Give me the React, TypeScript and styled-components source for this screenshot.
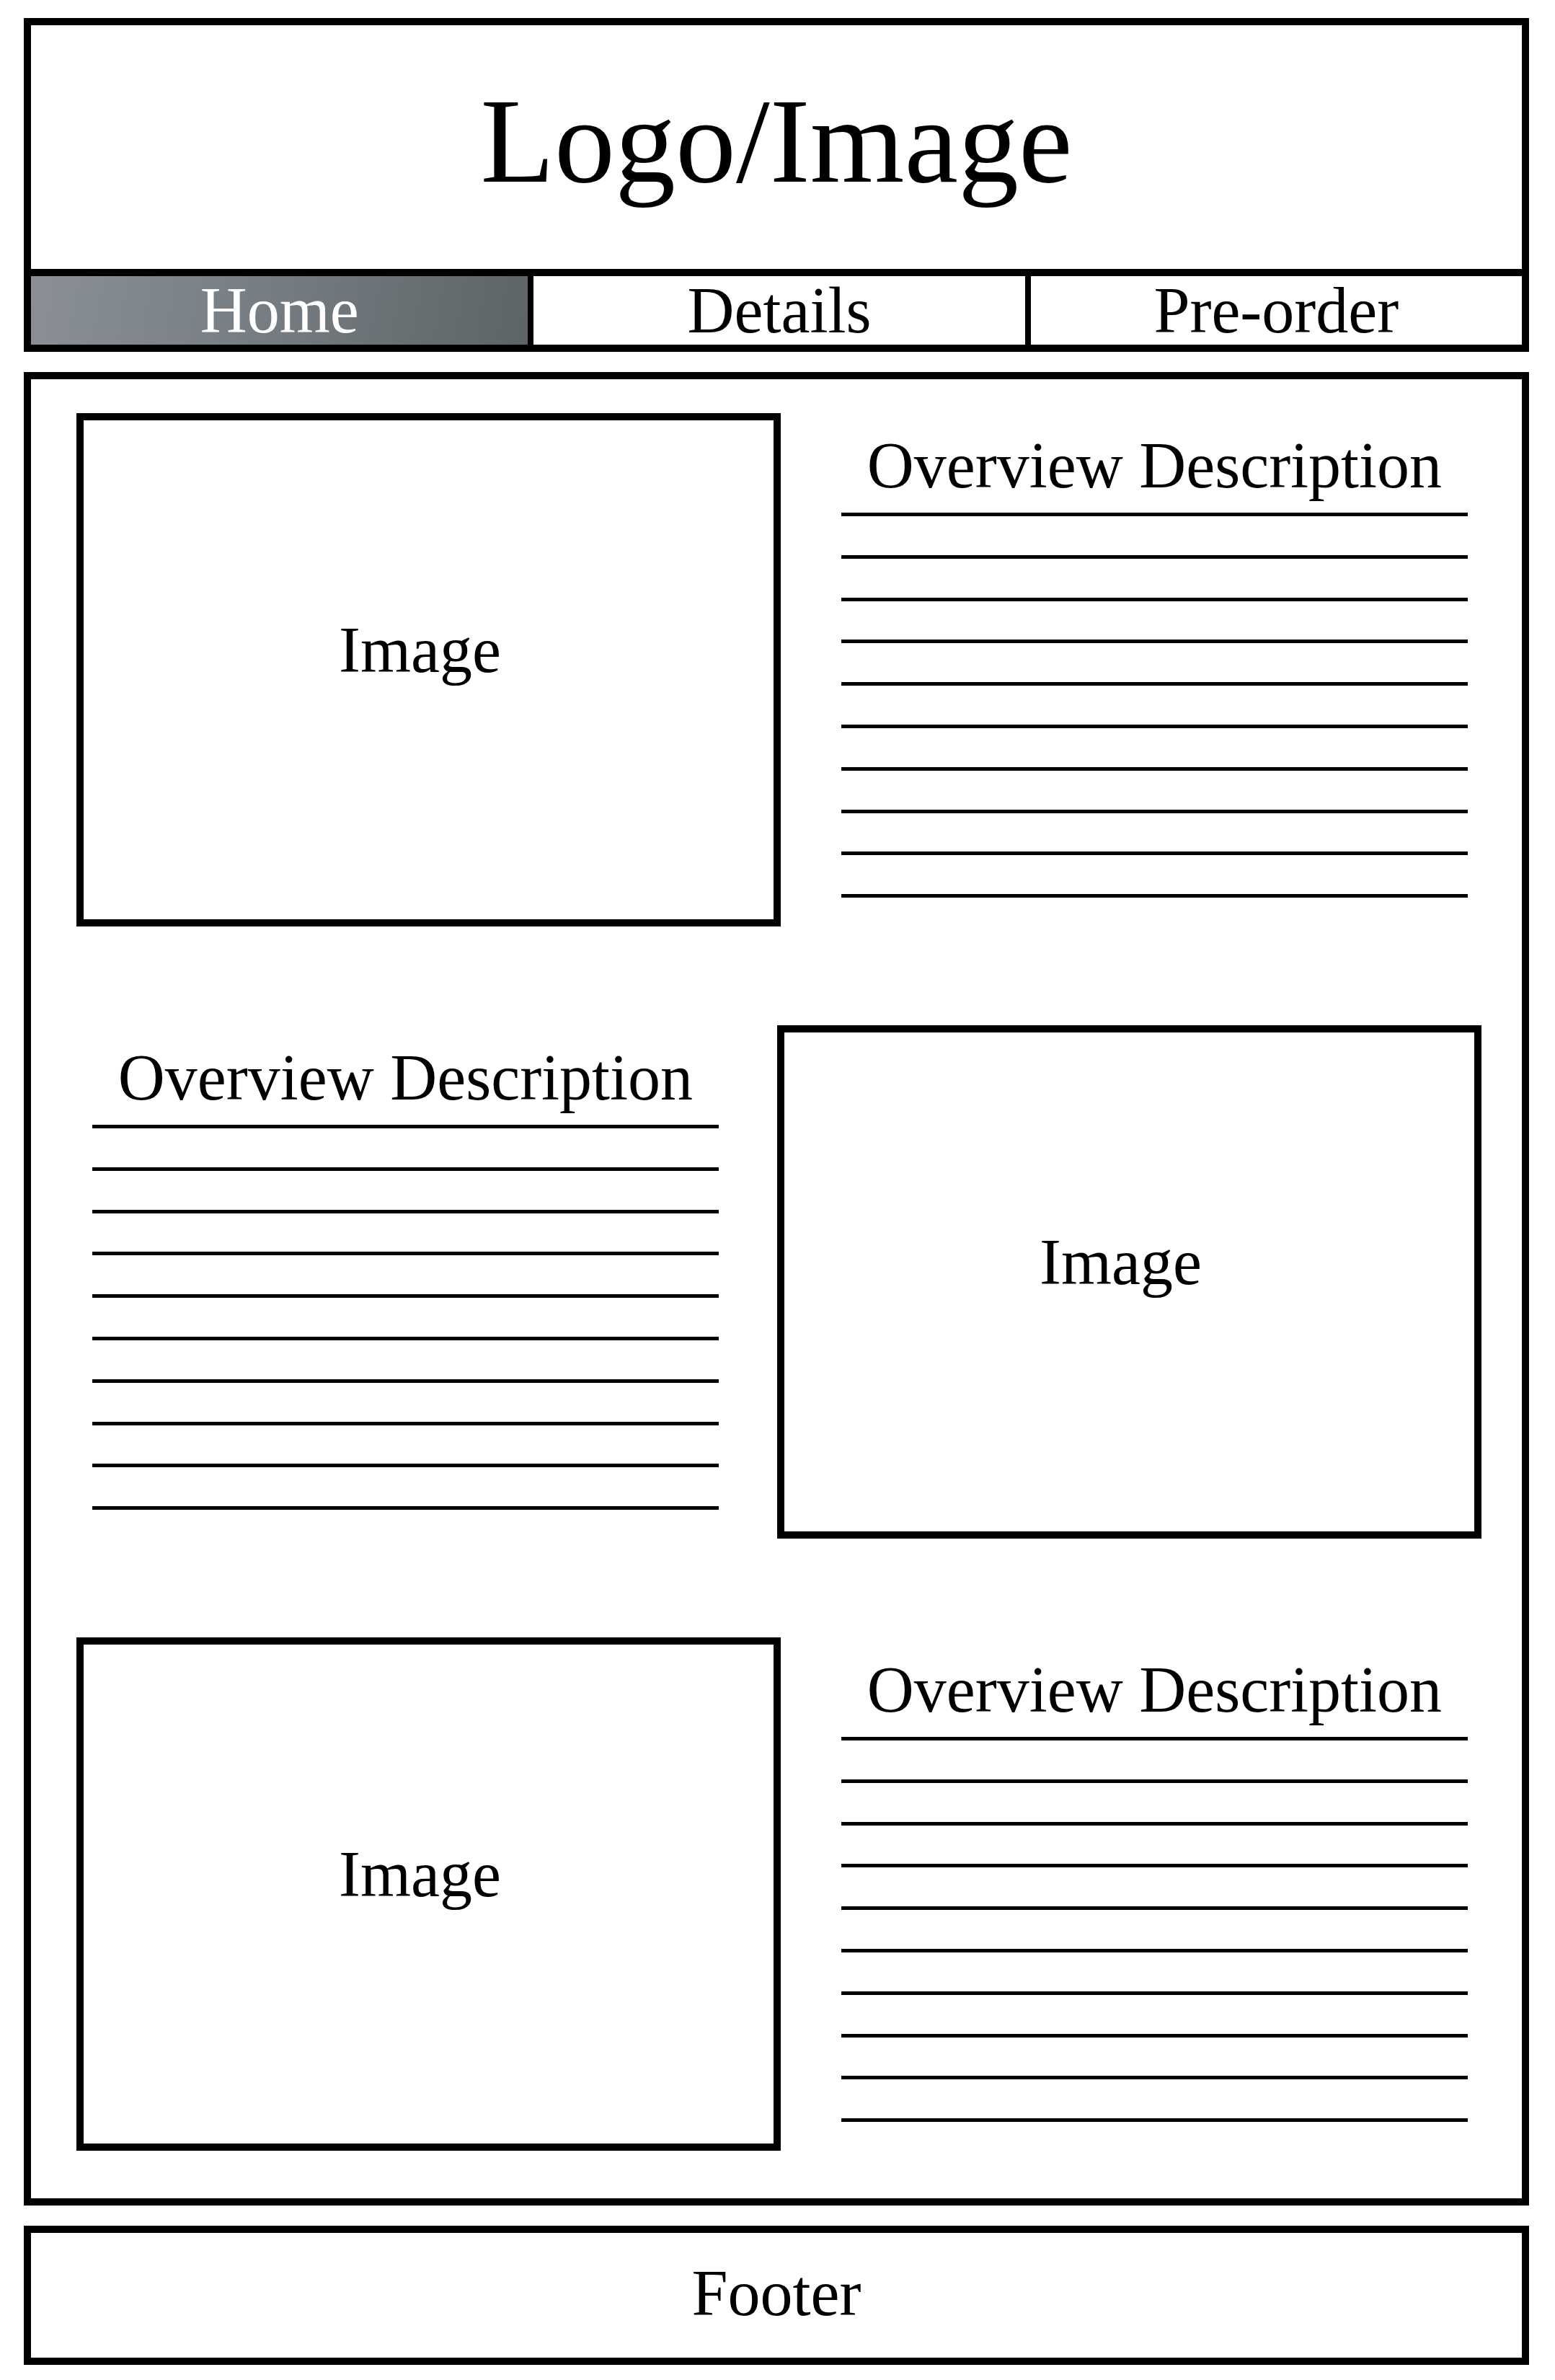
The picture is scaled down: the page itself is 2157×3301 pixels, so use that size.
import * as React from "react";
import styled, { createGlobalStyle } from "styled-components";

const GlobalStyle = createGlobalStyle`
  body {
    margin: 0;
    background: #fff;
    font-family: "Liberation Serif", "Times New Roman", serif;
    color: #000;
  }
`;

const navItems = ["Home", "Details", "Pre-order"];

interface ISection {
  imageFirst: boolean;
}

const sections: ISection[] = [
  { imageFirst: true },
  { imageFirst: false },
  { imageFirst: true },
];

const Overview = () => (
  <TextColumn>
    <Heading>Overview Description</Heading>
    <Rules>
      {Array.from({ length: 10 }).map((_, i) => (
        <Rule key={i} />
      ))}
    </Rules>
  </TextColumn>
);

const App = () => {
  return (
    <Page>
      <GlobalStyle />
      <Header>
        <LogoArea>Logo/Image</LogoArea>
        <Nav>
          {navItems.map((item, i) => (
            <NavItem key={item} $active={i === 0}>
              {item}
            </NavItem>
          ))}
        </Nav>
      </Header>

      <Main>
        {sections.map((s, i) => (
          <Row key={i} $imageFirst={s.imageFirst}>
            {s.imageFirst ? (
              <>
                <ImageBox>Image</ImageBox>
                <Overview />
              </>
            ) : (
              <>
                <Overview />
                <ImageBox>Image</ImageBox>
              </>
            )}
          </Row>
        ))}
      </Main>

      <Footer>Footer</Footer>
    </Page>
  );
};

export default App;

const Page = styled.div`
  width: 2088px;
  padding: 25px 0 26px 33px;
  display: flex;
  flex-direction: column;
  gap: 28px;
`;

const Header = styled.header`
  border: 10px solid #000;
  display: flex;
  flex-direction: column;
`;

const LogoArea = styled.div`
  height: 338px;
  box-sizing: border-box;
  padding-bottom: 18px;
  display: flex;
  align-items: center;
  justify-content: center;
  font-size: 168px;
  line-height: 1;
`;

const Nav = styled.nav`
  display: grid;
  grid-template-columns: repeat(3, 1fr);
  border-top: 10px solid #000;
  height: 95px;
`;

const NavItem = styled.div<{ $active?: boolean }>`
  display: flex;
  align-items: center;
  justify-content: center;
  font-size: 90px;
  line-height: 95px;
  color: ${(p) => (p.$active ? "#fff" : "#000")};
  background: ${(p) =>
    p.$active
      ? "linear-gradient(100deg, #8a9096 0%, #757c81 50%, #5c6467 100%)"
      : "#fff"};

  & + & {
    border-left: 8px solid #000;
  }
`;

const Main = styled.main`
  border: 10px solid #000;
  padding: 47px 0 66px;
  display: flex;
  flex-direction: column;
  gap: 137px;
`;

const Row = styled.section<{ $imageFirst: boolean }>`
  display: flex;
  align-items: flex-start;
  padding-left: ${(p) => (p.$imageFirst ? "63px" : "85px")};
  gap: ${(p) => (p.$imageFirst ? "84px" : "81px")};
`;

const ImageBox = styled.div`
  width: 977px;
  height: 712px;
  box-sizing: border-box;
  border: 10px solid #000;
  padding: 0 24px 54px 0;
  display: flex;
  align-items: center;
  justify-content: center;
  font-size: 90px;
  line-height: 1;
  flex-shrink: 0;
`;

const TextColumn = styled.div`
  width: 869px;
  padding-top: 28px;
  display: flex;
  flex-direction: column;
  flex-shrink: 0;
`;

const Heading = styled.h2`
  margin: 0;
  font-weight: normal;
  font-size: 90px;
  line-height: 90px;
  text-align: center;
  white-space: nowrap;
`;

const Rules = styled.div`
  margin-top: 20px;
  display: flex;
  flex-direction: column;
  gap: 53.8px;
`;

const Rule = styled.div`
  height: 5px;
  background: #000;
`;

const Footer = styled.footer`
  border: 10px solid #000;
  height: 167px;
  padding-bottom: 6px;
  box-sizing: content-box;
  display: flex;
  align-items: center;
  justify-content: center;
  font-size: 90px;
  line-height: 1;
`;
